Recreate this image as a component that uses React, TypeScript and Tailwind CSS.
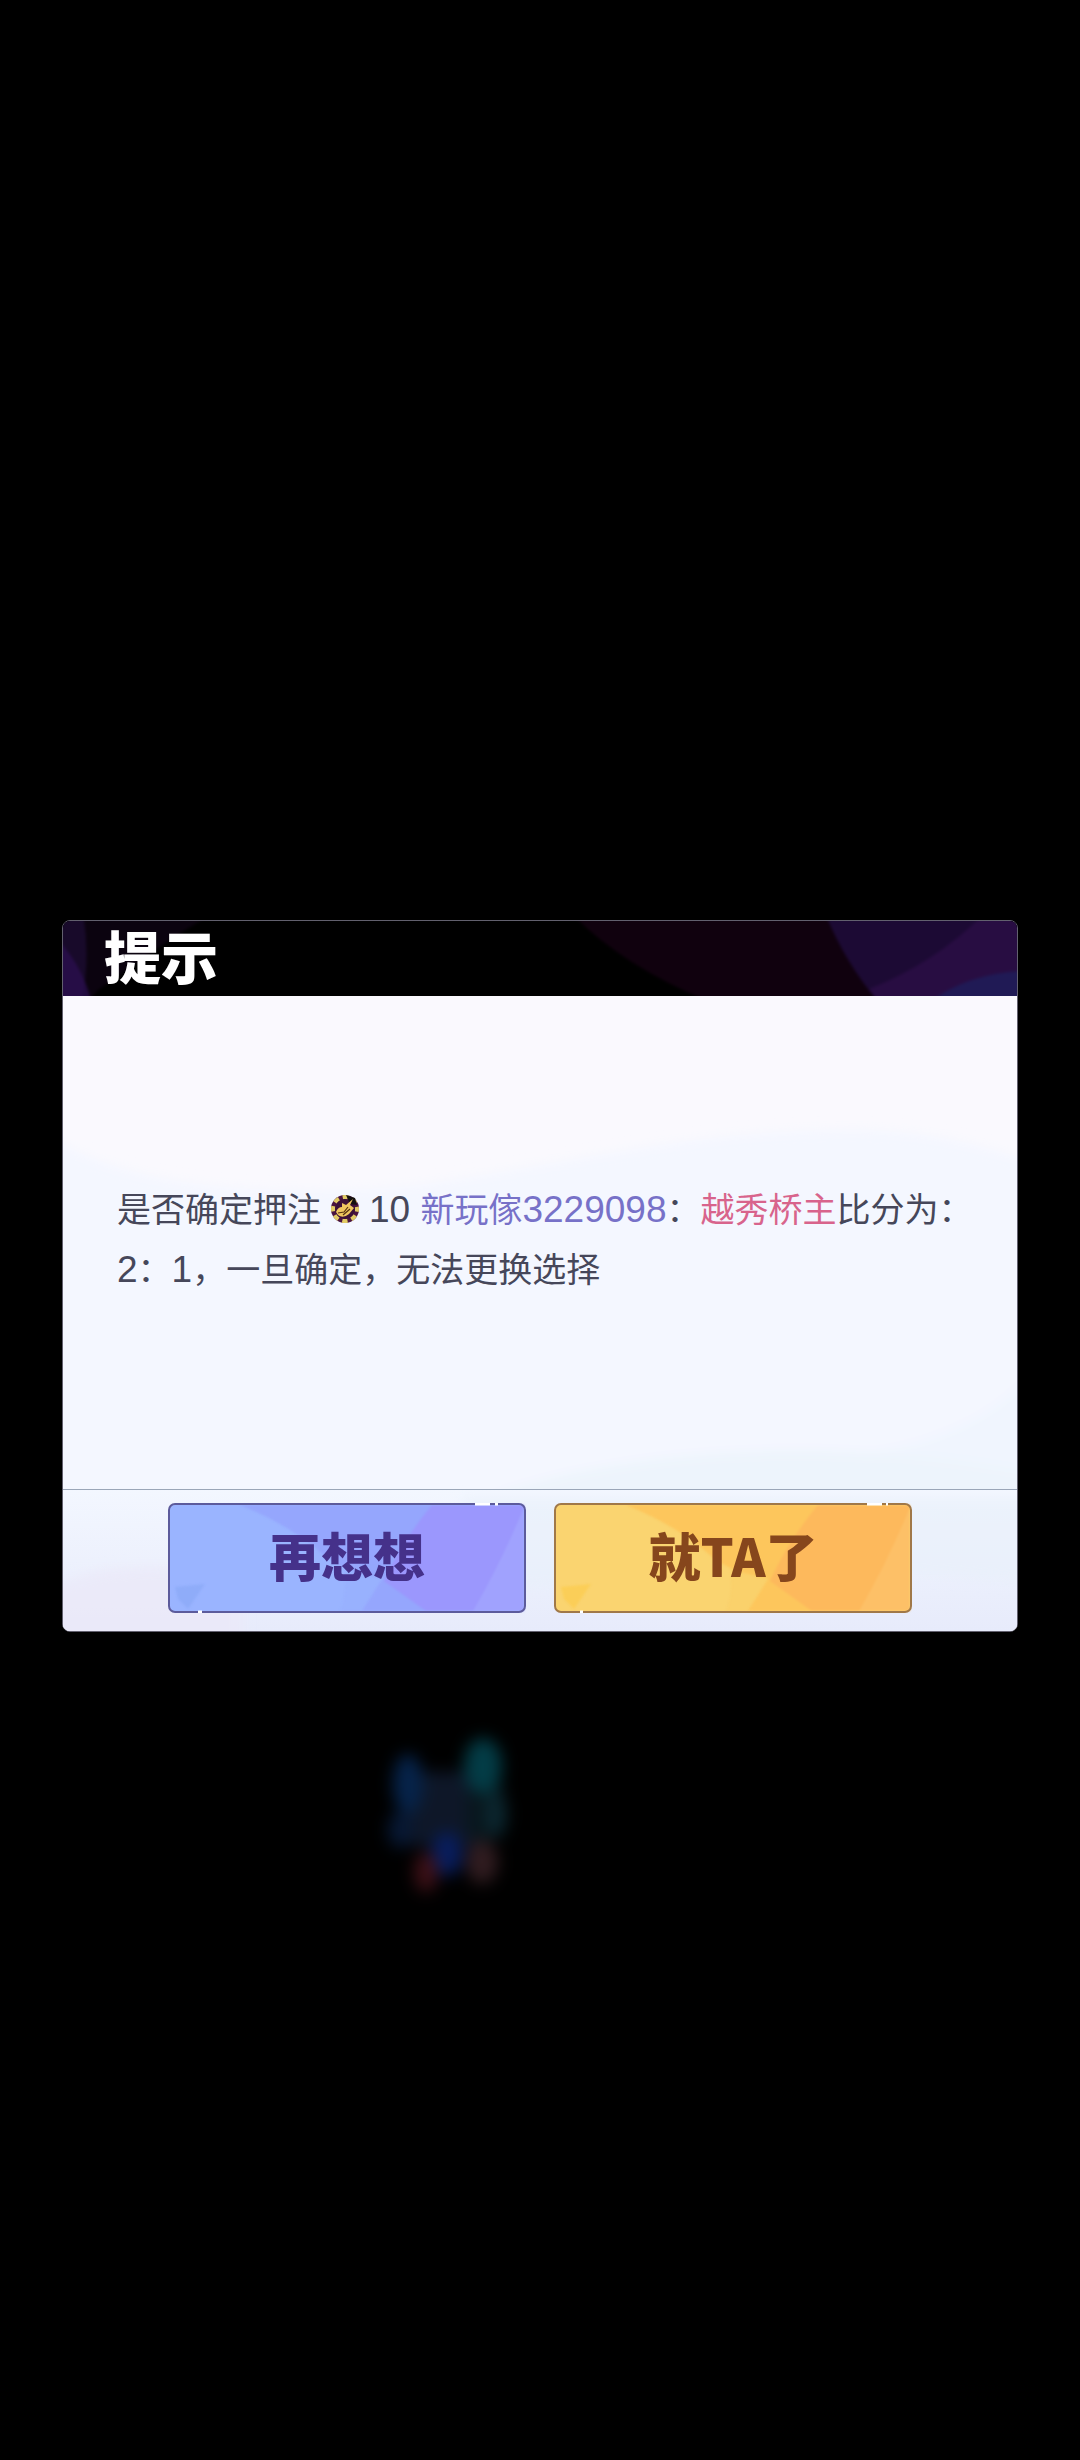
const HeaderArt = () => (
    <svg className="absolute inset-0 h-full w-full" viewBox="0 0 954 75" preserveAspectRatio="none" aria-hidden="true">
        <defs>
            <filter id="headerSoften" colorInterpolationFilters="sRGB">
                <feGaussianBlur stdDeviation="1.5" />
            </filter>
        </defs>
        <g filter="url(#headerSoften)">
            <path d="M-8 -8H150Q90 28 34 70L24 83H-8Z" fill="#0b030f" />
            <path d="M-8 -8H20Q28 38 18 83H-8Z" fill="#180a2a" />
            <path d="M-8 16Q20 44 29 83H-8Z" fill="#2b0f50" fillOpacity="0.75" />
            <path d="M508 -8Q560 46 652 83H962V-8Z" fill="#10010e" />
            <path d="M762 -8Q782 42 817 83H962V-8Z" fill="#1c0a34" />
            <path d="M922 -8Q872 42 806 68L817 83H962V-8Z" fill="#280d42" />
            <path d="M864 83Q904 52 962 50V83Z" fill="#201a55" />
        </g>
    </svg>
);

const PanelArt = () => (
    <svg className="absolute inset-0 h-full w-full" viewBox="0 0 954 635" preserveAspectRatio="none" aria-hidden="true">
        <defs>
            <linearGradient id="footerTint" x1="0" y1="0" x2="0" y2="1">
                <stop offset="0" stopColor="#f3f7ff" />
                <stop offset="1" stopColor="#e7ebfb" />
            </linearGradient>
            <filter id="soften" x="-10%" y="-10%" width="120%" height="120%">
                <feGaussianBlur stdDeviation="6" />
            </filter>
        </defs>
        <rect width="954" height="635" fill="#faf9fe" />
        <g filter="url(#soften)">
            <path d="M-20 135Q80 210 350 190C520 165 640 132 800 134Q890 136 980 170V660H-20Z" fill="#f4f7ff" />
            <path d="M980 360Q930 440 790 460T600 510H980Z" fill="#f0f5fe" />
            <path d="M430 500C560 452 780 438 980 480V510H430Z" fill="#edf4fc" />
        </g>
        <rect y="494" width="954" height="141" fill="url(#footerTint)" />
        <g filter="url(#soften)">
            <path d="M-20 600Q30 555 180 580V660H-20Z" fill="#ebe8f8" fillOpacity="0.7" />
            <path d="M400 502H980V590Q760 560 400 600Z" fill="#e7f0fa" fillOpacity="0.6" />
        </g>
    </svg>
);

type Tone = {
    base: string;
    edge: string;
    fold: string;
    deep: string;
    light: string;
    corner: string;
    notch: string;
    ticks: string;
};

const BLUE: Tone = {
    base: "#9ab4ff",
    edge: "#5c5b9c",
    fold: "#95a6fd",
    deep: "#9b97fd",
    light: "#a0a2fe",
    corner: "#8facf9",
    notch: "M307 1h15M327 1h3M30 109h4",
    ticks: "M322 1h5",
};

const GOLD: Tone = {
    base: "#fad470",
    edge: "#a07848",
    fold: "#fdc65c",
    deep: "#fdb95c",
    light: "#fdc067",
    corner: "#fbce58",
    notch: "M313 1h15M332 1h2M26 109h3",
    ticks: "M328 1h4",
};

const ButtonArt = ({ tone }: { tone: Tone }) => (
    <svg className="absolute inset-0 h-full w-full" viewBox="0 0 358 110" preserveAspectRatio="none" aria-hidden="true">
        <defs>
            <filter id="foldSoften" colorInterpolationFilters="sRGB">
                <feGaussianBlur stdDeviation="1" />
            </filter>
        </defs>
        <rect x="1" y="1" width="356" height="108" rx="6" fill={tone.base} />
        <g filter="url(#foldSoften)">
            <path d="M72 2Q122 22 156 52Q180 74 240 78L290 2Z" fill={tone.fold} />
            <path d="M172 108Q180 90 176 64L222 60L214 108Z" fill={tone.fold} fillOpacity="0.25" />
            <path d="M194 108L218 70L280 108Z" fill={tone.fold} />
            <path d="M264 2Q234 38 216 78L258 108H356V2Z" fill={tone.deep} />
            <path d="M356 4Q334 58 305 108H356Z" fill={tone.light} />
            <path d="M7 84L37 81L20 106L10 96Z" fill={tone.corner} />
        </g>
        <rect x="1" y="1" width="356" height="108" rx="6" fill="none" stroke={tone.edge} strokeWidth="2" />
        <path d={tone.notch} stroke="#fff" strokeWidth="3" />
        <path d={tone.ticks} stroke={tone.edge} strokeWidth="2" strokeDasharray="1 1" />
    </svg>
);

const Chip = () => (
    <svg className="mx-[9px] inline-block h-[30px] w-[30px] -translate-y-1" viewBox="0 0 30 30" role="img" aria-label="筹码">
        <circle cx="15" cy="15" r="14" fill="#4a1440" />
        <circle cx="15" cy="15" r="12" fill="none" stroke="#e2cc66" strokeWidth="4" strokeDasharray="5.4 4.02" strokeDashoffset="2.7" />
        <circle cx="15" cy="15" r="10" fill="#3d1138" />
        <path d="M16 1L25 4L27 11L20 10Z" fill="#15100f" />
        <path d="M12 9L16 11L23 5L20 11L24 14L19 20Q13 25 8 21L6 18Q8 13 12 13Z" fill="#f0c65f" />
        <path d="M8 19L14 18L18 13M13 21L20 15" stroke="#56300f" strokeWidth="1.2" fill="none" />
    </svg>
);

const Glow = () => (
    <svg className="mt-[78px] ml-[33.333%] h-[200px] w-[180px]" viewBox="0 0 180 200" aria-hidden="true">
        <defs>
            <filter id="glow" x="-60%" y="-60%" width="220%" height="220%" colorInterpolationFilters="sRGB">
                <feGaussianBlur stdDeviation="8" />
            </filter>
        </defs>
        <g filter="url(#glow)">
            <rect x="44" y="62" width="76" height="74" rx="12" fill="#0e1728" />
            <rect x="108" y="70" width="36" height="60" rx="10" fill="#08161c" />
            <ellipse cx="48" cy="74" rx="15" ry="30" fill="#06234a" />
            <ellipse cx="40" cy="120" rx="12" ry="18" fill="#071834" />
            <ellipse cx="123" cy="56" rx="19" ry="28" fill="#033c46" />
            <ellipse cx="136" cy="104" rx="11" ry="22" fill="#0b2730" />
            <ellipse cx="87" cy="144" rx="16" ry="22" fill="#081d5c" />
            <ellipse cx="66" cy="162" rx="12" ry="20" fill="#3c1016" />
            <ellipse cx="122" cy="152" rx="16" ry="22" fill="#301c20" />
        </g>
    </svg>
);

export default function App() {
    return (
        <main lang="zh-CN" className="min-h-screen bg-black pt-[920px] font-['Liberation_Sans','Noto_Sans_CJK_SC',sans-serif]">
            <section role="dialog" aria-labelledby="dialog-title" className="mx-[62px] overflow-hidden rounded-lg border border-[#62606e]">
                <header className="relative flex h-[75px] items-center bg-black pl-[41px]">
                    <HeaderArt />
                    <h1 id="dialog-title" className="relative text-[57px] leading-[72px] font-black text-white">
                        提示
                    </h1>
                </header>

                <div className="relative">
                    <PanelArt />
                    <div className="relative flex min-h-[493px] items-center pr-10 pb-1.5 pl-[54px]">
                        <p className="text-[34px] leading-[60px] text-[#46475a]">
                            是否确定押注
                            <Chip />
                            <span className="text-[37px]">10 </span>
                            <span className="text-[#7771c8]">
                                新玩傢<span className="text-[37px]">3229098</span>
                            </span>
                            ：<span className="text-[#d8648c]">越秀桥主</span>
                            <span>比分为：</span>
                            <span className="text-[37px]">2</span>：<span className="text-[37px]">1</span>
                            <span>，一旦确定，无法更换选择</span>
                        </p>
                    </div>

                    <footer className="relative flex justify-center gap-7 border-t border-[#9aa6b8] pt-[13px] pb-[18px] font-['Noto_Sans_CJK_SC',sans-serif] text-[52px] leading-[72px] font-black">
                        <button type="button" className="relative h-[110px] w-[358px] pb-1.5 text-[#45318a]">
                            <ButtonArt tone={BLUE} />
                            <span className="relative">再想想</span>
                        </button>
                        <button type="button" className="relative h-[110px] w-[358px] pb-1.5 text-[#86461c]">
                            <ButtonArt tone={GOLD} />
                            <span className="relative">就TA了</span>
                        </button>
                    </footer>
                </div>
            </section>

            <Glow />
        </main>
    );
}
